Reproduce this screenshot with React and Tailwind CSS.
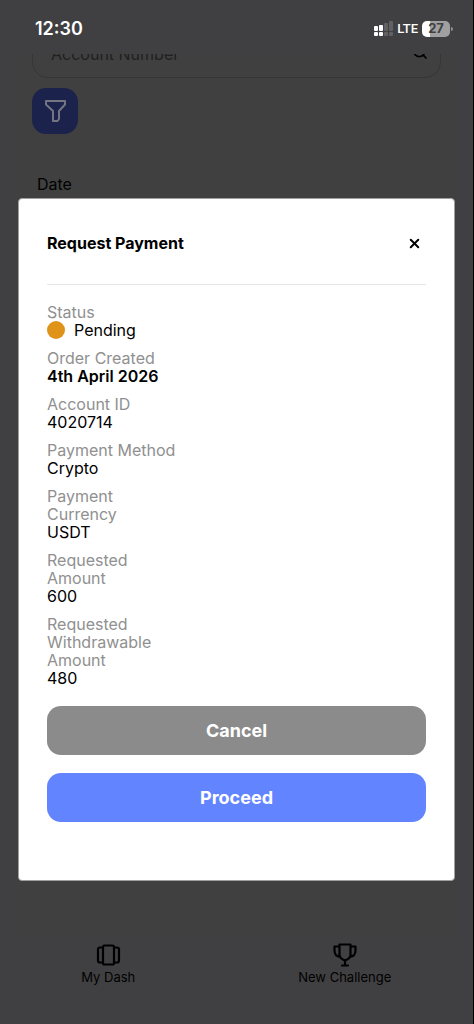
import React from 'react';
import { Search, X } from 'lucide-react';

const details = [
  { label: 'Status', value: 'Pending', dot: true },
  { label: 'Order Created', value: '4th April 2026', strong: true },
  { label: 'Account ID', value: '4020714' },
  { label: 'Payment Method', value: 'Crypto' },
  { label: 'Payment Currency', value: 'USDT' },
  { label: 'Requested Amount', value: '600' },
  { label: 'Requested Withdrawable Amount', value: '480' },
];

function StatusBar() {
  return (
    <header className="flex h-[54px] shrink-0 items-center justify-between pr-5 pl-[35px] pt-1 text-white">
      <span className="text-lg font-semibold">12:30</span>
      <div className="flex items-center gap-1">
        <svg width="20" height="16" viewBox="0 0 20 16" aria-hidden="true">
          <g fill="#ffffff">
            <rect x="1" y="5" width="4" height="5" rx="1" />
            <rect x="6" y="4" width="4" height="6" rx="1" />
            <rect x="1" y="11" width="4" height="4" rx="1" />
            <rect x="6" y="11" width="4" height="4" rx="1" />
          </g>
          <g fill="#616163">
            <rect x="11" y="2" width="4" height="8" rx="1" />
            <rect x="16" y="0" width="4" height="10" rx="1" />
            <rect x="11" y="11" width="4" height="4" rx="1" />
            <rect x="16" y="11" width="4" height="4" rx="1" />
          </g>
        </svg>
        <span className="font-['Roboto',sans-serif] text-[13px] font-medium">LTE</span>
        <div className="flex items-center gap-px">
          <div className="flex h-4 w-7 items-center justify-center rounded-[5px] bg-linear-to-r from-white from-27% to-[#a0a0a1] to-27% text-[13px] font-bold text-[#404042]">
            27
          </div>
          <div className="h-1 w-[2px] rounded-r-full bg-[#929293]" />
        </div>
      </div>
    </header>
  );
}

function RequestPaymentDialog() {
  return (
    <div
      role="dialog"
      aria-modal="true"
      aria-labelledby="dialog-title"
      className="absolute inset-x-[18px] top-[198px] rounded-[4px] border border-[#a0a0a0] bg-white px-7 pb-[58px] text-black"
    >
      <div className="flex h-[86px] items-center justify-between border-b border-[#e6e6e6] pt-[3px]">
        <h2 id="dialog-title" className="text-base font-bold">
          Request Payment
        </h2>
        <button type="button" aria-label="Close" className="mr-[3px] p-px">
          <X size={15} strokeWidth={3.2} />
        </button>
      </div>
      <dl className="flex flex-col gap-[10px] pt-[18px] text-base leading-[18px]">
        {details.map((item) => (
          <div key={item.label}>
            <dt className="w-[132px] text-[#909090]">{item.label}</dt>
            <dd className={item.strong ? 'font-semibold' : 'flex items-center gap-[9px]'}>
              {item.dot && <span className="size-[18px] rounded-full bg-[#e09319]" />}
              {item.value}
            </dd>
          </div>
        ))}
      </dl>
      <div className="flex flex-col gap-[18px] pt-[19px] text-lg font-bold text-white">
        <button type="button" className="h-[49px] rounded-[14px] bg-[#8b8b8b]">
          Cancel
        </button>
        <button type="button" className="h-[49px] rounded-[14px] bg-[#6384ff]">
          Proceed
        </button>
      </div>
    </div>
  );
}

function BottomNav() {
  return (
    <nav className="grid h-[86px] shrink-0 grid-cols-2 items-start pt-1 text-[13px] leading-[18px] text-black">
      <a href="#dash" className="flex flex-col items-center pr-5">
        <svg width="26" height="26" viewBox="0 0 26 26" fill="none" stroke="currentColor" strokeWidth="2.2" strokeLinejoin="round" aria-hidden="true">
          <rect x="8" y="3.5" width="11" height="19" rx="1.5" />
          <path d="M8 5.500H5a2 2 0 0 0-2 2v11a2 2 0 0 0 2 2h3M19 5.500h3a2 2 0 0 1 2 2v11a2 2 0 0 1-2 2h-3" />
        </svg>
        My Dash
      </a>
      <a href="#challenge" className="flex flex-col items-center pr-5">
        <svg width="26" height="26" viewBox="0 0 26 26" fill="none" stroke="currentColor" strokeWidth="2.2" strokeLinecap="round" strokeLinejoin="round" aria-hidden="true">
          <path d="M7.500 2.500h11v10c0 3-2.500 5-5.500 6-3-1-5.500-3-5.500-6zM7.500 4.500H2.500v4c0 3.500 2.200 6 5.800 6.500M18.500 4.500h5v4c0 3.500-2.200 6-5.800 6.500M13 19v4M10 23.500h6" />
        </svg>
        New Challenge
      </a>
    </nav>
  );
}

export default function App() {
  return (
    <div className="relative flex min-h-screen flex-col border-r border-black bg-[#404042] font-['Inter','Liberation_Sans',sans-serif]">
      <StatusBar />
      <main className="mx-[18px] flex-1 overflow-hidden bg-[#404040] px-[14px]">
        <label className="-mt-6 flex h-12 items-center rounded-2xl border border-[#363638] pr-3 pl-[18px]">
          <input
            type="text"
            aria-label="Account Number"
            placeholder="Account Number"
            className="min-w-0 flex-1 bg-transparent text-base outline-none placeholder:text-[#202020]"
          />
          <Search size={16} strokeWidth={2.6} className="mb-1 text-black" />
        </label>
        <button
          type="button"
          aria-label="Filter"
          className="mt-[10px] flex size-[46px] items-center justify-center rounded-[14px] bg-[#1b234c] text-[#737580]"
        >
          <svg width="24" height="24" viewBox="0 0 24 24" fill="none" stroke="currentColor" strokeWidth="2" strokeLinejoin="round" aria-hidden="true">
            <path d="M3 2h19v3.500l-6 6.500v8l-1.500 2H10V12L3 5.500z" />
          </svg>
        </button>
        <p className="mt-[38px] pl-[5px] text-base text-black">Date</p>
      </main>
      <BottomNav />
      <RequestPaymentDialog />
    </div>
  );
}
